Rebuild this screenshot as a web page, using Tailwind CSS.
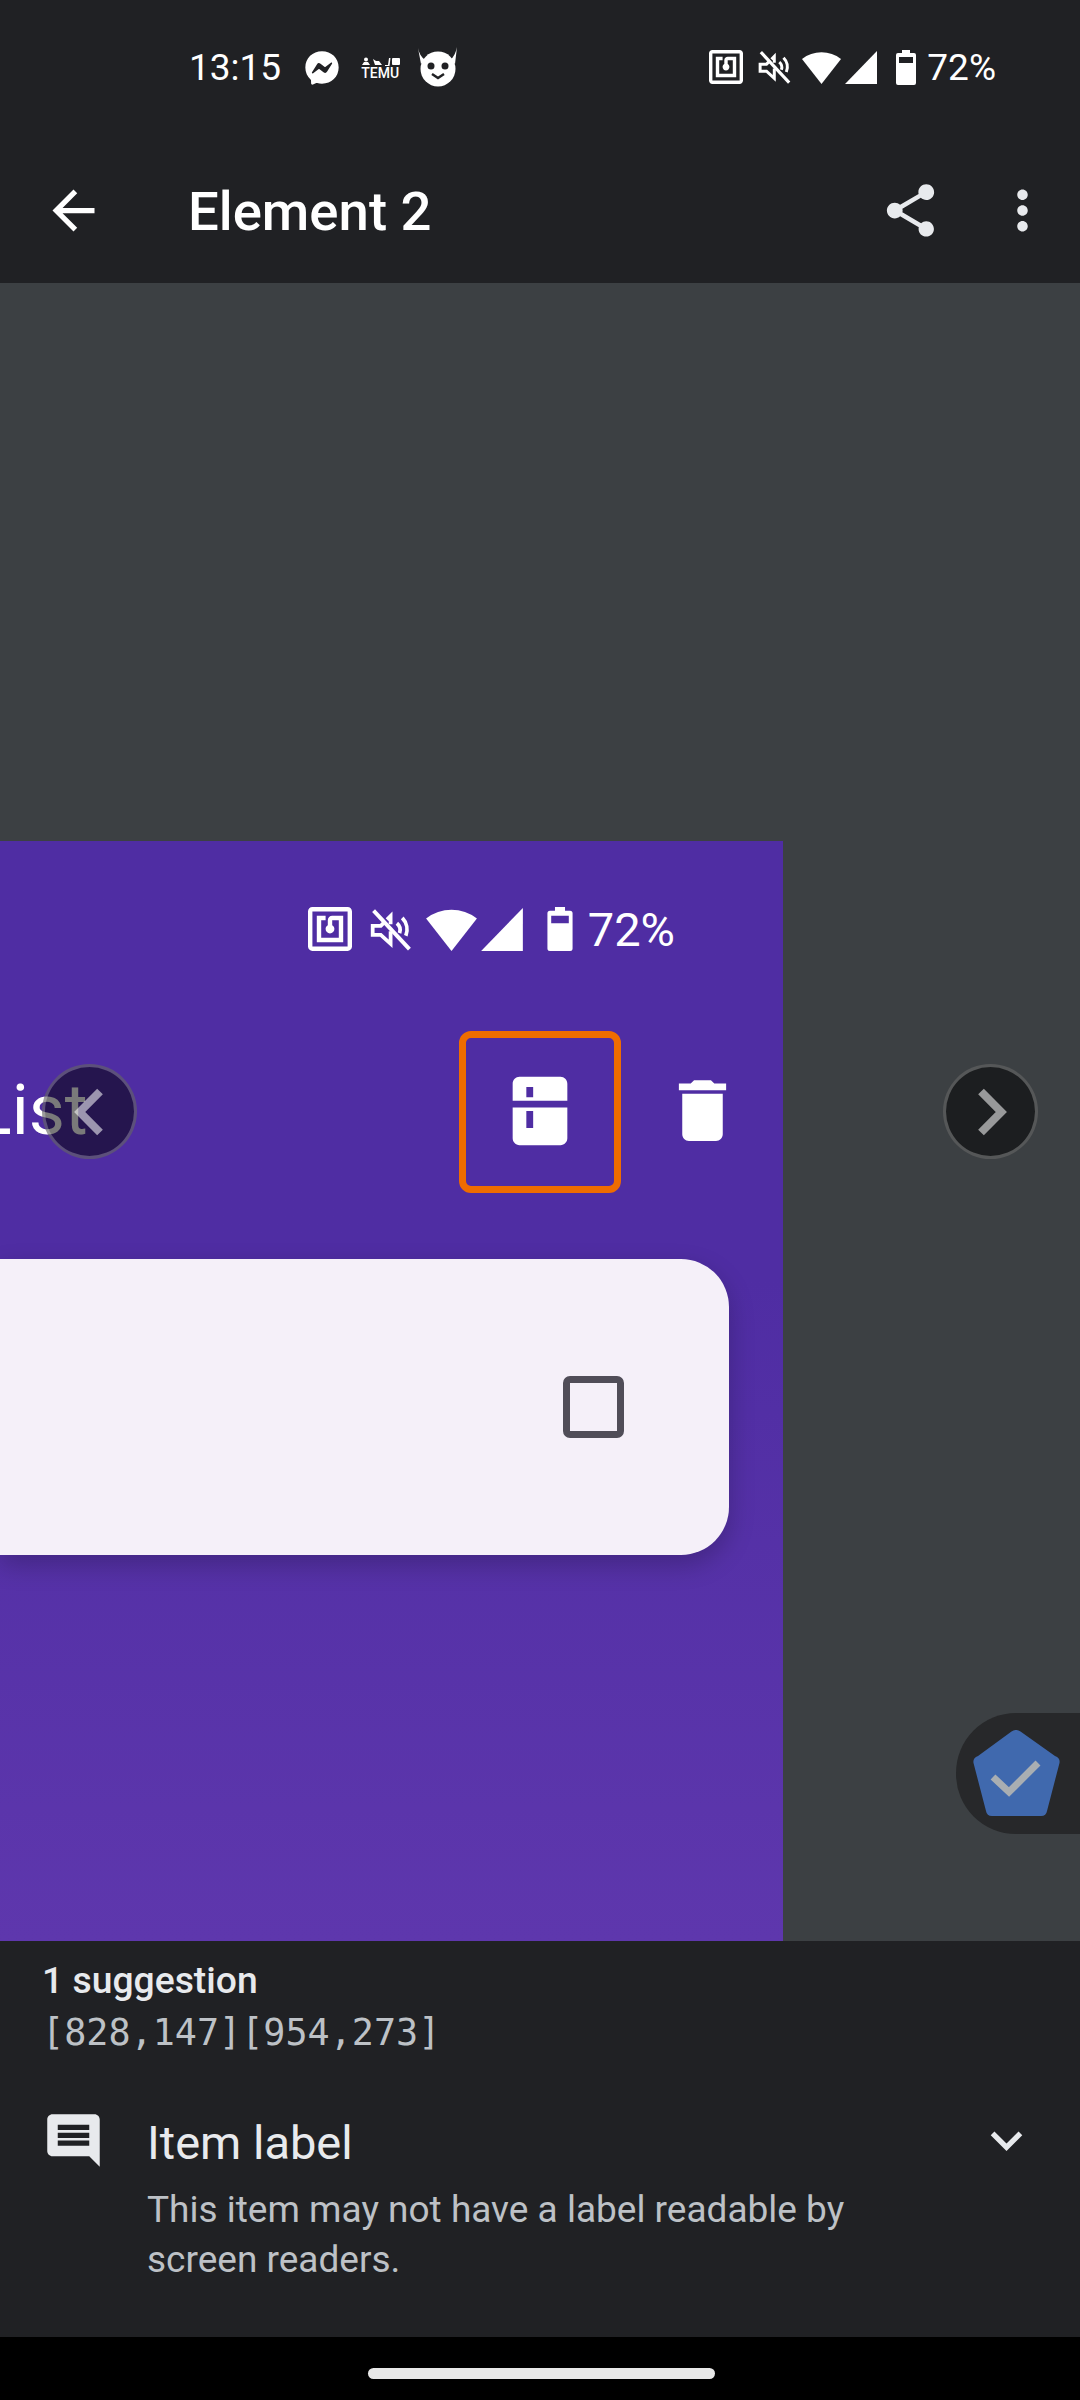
<!DOCTYPE html>
<html lang="en">
<head>
  <meta charset="UTF-8" />
  <meta name="viewport" content="width=device-width, initial-scale=1.0" />
  <title>Element 2</title>
  <script src="https://cdn.jsdelivr.net/npm/@tailwindcss/browser@4"></script>
</head>
<body class="w-[1080px] h-[2400px] overflow-hidden flex flex-col bg-black font-['Roboto',sans-serif]">

  <!-- Status bar -->
  <div class="h-[134px] shrink-0 bg-[#202124] flex items-center pl-[189px] pr-[84px] text-white">
    <span class="text-[37px] leading-none">13:15</span>
    <svg class="ml-[21px] mt-[2px] w-[40px] h-[40px]" viewBox="0 0 24 24"><path fill="#fff" d="M12 2C6.36 2 2 6.13 2 11.7c0 2.91 1.19 5.44 3.14 7.17.16.14.26.35.27.57l.05 1.78c.02.57.6.94 1.12.71l1.98-.87c.17-.08.36-.09.54-.04.91.25 1.88.38 2.9.38 5.64 0 10-4.13 10-9.7S17.64 2 12 2z"/><path fill="#202124" d="M6 14.54l2.94-4.66a1.5 1.5 0 0 1 2.17-.4l2.34 1.75a.6.6 0 0 0 .72 0l3.16-2.4c.42-.32.97.18.69.63l-2.94 4.66a1.5 1.5 0 0 1-2.17.4l-2.34-1.75a.6.6 0 0 0-.72 0l-3.16 2.4c-.42.32-.97-.18-.69-.63z"/></svg>
    <div class="ml-[18px] w-[40px] flex flex-col items-center mt-[2px]">
      <svg class="w-[39px] h-[9px]" viewBox="0 0 39 9"><circle cx="5" cy="2.5" r="2" fill="#fff"/><path fill="#fff" d="M1 8l2-3h4l2 3z"/><path fill="#fff" d="M12 2l3 2h3l3 4h-7z"/><path fill="#fff" d="M24 8h3l1-7h1.5l-1 8h-4.500z"/><rect x="31" y="1" width="8" height="7" rx="1" fill="#fff"/></svg>
      <span class="text-[14px] leading-[13px] font-medium mt-[1px]">TEMU</span>
    </div>
    <svg class="ml-[18px] w-[40px] h-[40px]" viewBox="0 0 40 40"><path fill="#fff" d="M0 1c1 5 3 9 7 12l-4 4zM39 0c-1 5-3 10-7 13l5 4z"/><circle cx="20" cy="22" r="17.500" fill="#fff"/><circle cx="13" cy="19" r="3.500" fill="#202124"/><circle cx="27" cy="19" r="3.500" fill="#202124"/><path d="M14 27l6 4 6-4" fill="none" stroke="#202124" stroke-width="2.500"/></svg>

    <svg class="ml-auto w-[34px] h-[34px]" viewBox="2 2 20 20"><path fill="#fff" d="M20 2H4c-1.100 0-2 .9-2 2v16c0 1.100.9 2 2 2h16c1.100 0 2-.9 2-2V4c0-1.100-.9-2-2-2zm0 18H4V4h16v16zM18 6h-5c-1.100 0-2 .9-2 2v2.280c-.6.35-1 .98-1 1.720 0 1.100.9 2 2 2s2-.9 2-2c0-.74-.4-1.380-1-1.720V8h3v8H8V8h2V6H6v12h12V6z"/></svg>
    <svg class="ml-[15px] w-[34px] h-[34px]" viewBox="0 0 24 24"><g fill="none" stroke="#fff" stroke-width="2.100"><path d="M8.500 7.500L6 10H1.500v5H6l5.500 5v-7"/><path d="M11.500 9V4.500L9.500 6.500"/><path d="M15 8.500a5 5 0 0 1 1.500 5.500M18 5.500a9.500 9.500 0 0 1 2 10"/><path d="M2 1.500L22 23" stroke-width="2.200"/></g></svg>
    <svg class="ml-[10px] w-[39px] h-[33px]" viewBox="0 0 39 33"><path fill="#fff" d="M19.500 33L0 8A32 32 0 0 1 39 8z"/></svg>
    <svg class="ml-[4px] w-[32px] h-[33px]" viewBox="0 0 32 33"><path fill="#fff" d="M32 0v33H0z"/></svg>
    <svg class="ml-[19px] w-[20px] h-[35px]" viewBox="0 0 20 35"><path fill="#fff" fill-rule="evenodd" d="M6 0h8v3h4a2 2 0 0 1 2 2v28a2 2 0 0 1-2 2H2a2 2 0 0 1-2-2V5a2 2 0 0 1 2-2h4zM3 7v6h14V7z"/></svg>
    <span class="ml-[11px] text-[37px] leading-none">72%</span>
  </div>

  <!-- App bar -->
  <div class="h-[149px] shrink-0 bg-[#202124] flex items-center pt-[3px] pl-[42px] pr-[26px]">
    <svg class="w-[63px] h-[63px]" viewBox="0 0 24 24"><path fill="#fff" d="M20 11H7.830l5.590-5.590L12 4l-8 8 8 8 1.410-1.410L7.830 13H20v-2z"/></svg>
    <span class="ml-[83px] mt-[2px] text-[54.5px] leading-none font-medium text-white">Element 2</span>
    <svg class="ml-auto w-[63px] h-[63px]" viewBox="0 0 24 24"><path fill="#e8eaed" d="M18 16.080c-.76 0-1.440.3-1.960.77L8.910 12.700c.05-.23.09-.46.09-.7s-.04-.47-.09-.7l7.050-4.110c.54.5 1.250.81 2.040.81 1.660 0 3-1.340 3-3s-1.340-3-3-3-3 1.340-3 3c0 .24.04.47.09.7L8.040 9.810C7.500 9.310 6.790 9 6 9c-1.660 0-3 1.340-3 3s1.340 3 3 3c.79 0 1.500-.31 2.040-.81l7.120 4.160c-.05.21-.08.43-.08.65 0 1.610 1.310 2.920 2.920 2.920 1.610 0 2.920-1.310 2.920-2.920s-1.310-2.920-2.920-2.920z"/></svg>
    <svg class="ml-[49px] w-[63px] h-[63px]" viewBox="0 0 24 24"><path fill="#e8eaed" d="M12 8c1.100 0 2-.9 2-2s-.9-2-2-2-2 .9-2 2 .9 2 2 2zm0 2c-1.100 0-2 .9-2 2s.9 2 2 2 2-.9 2-2-.9-2-2-2zm0 6c-1.100 0-2 .9-2 2s.9 2 2 2 2-.9 2-2-.9-2-2-2z"/></svg>
  </div>

  <!-- Screenshot preview -->
  <div class="relative h-[1658px] shrink-0 bg-[#3c4043] overflow-hidden">
    <div class="relative mt-[558px] w-[783px] h-[1100px] overflow-hidden bg-linear-to-b from-[#4f2da3] from-40% to-[#5e37ad]">
      <div class="h-[176px] flex items-center justify-end pr-[108px] text-white">
        <svg class="w-[44px] h-[44px]" viewBox="2 2 20 20"><path fill="#fff" d="M20 2H4c-1.100 0-2 .9-2 2v16c0 1.100.9 2 2 2h16c1.100 0 2-.9 2-2V4c0-1.100-.9-2-2-2zm0 18H4V4h16v16zM18 6h-5c-1.100 0-2 .9-2 2v2.280c-.6.35-1 .98-1 1.720 0 1.100.9 2 2 2s2-.9 2-2c0-.74-.4-1.380-1-1.720V8h3v8H8V8h2V6H6v12h12V6z"/></svg>
        <svg class="ml-[18px] w-[43px] h-[43px]" viewBox="0 0 24 24"><g fill="none" stroke="#fff" stroke-width="2.100"><path d="M8.500 7.500L6 10H1.500v5H6l5.500 5v-7"/><path d="M11.500 9V4.500L9.500 6.500"/><path d="M15 8.500a5 5 0 0 1 1.500 5.500M18 5.500a9.500 9.500 0 0 1 2 10"/><path d="M2 1.500L22 23" stroke-width="2.200"/></g></svg>
        <svg class="ml-[13px] w-[51px] h-[43px]" viewBox="0 0 39 33"><path fill="#fff" d="M19.500 33L0 8A32 32 0 0 1 39 8z"/></svg>
        <svg class="ml-[4px] w-[42px] h-[43px]" viewBox="0 0 32 33"><path fill="#fff" d="M32 0v33H0z"/></svg>
        <svg class="ml-[24px] w-[26px] h-[44px]" viewBox="0 0 20 35"><path fill="#fff" fill-rule="evenodd" d="M6 0h8v3h4a2 2 0 0 1 2 2v28a2 2 0 0 1-2 2H2a2 2 0 0 1-2-2V5a2 2 0 0 1 2-2h4zM3 7v6h14V7z"/></svg>
        <span class="ml-[15px] text-[47px] leading-none">72%</span>
      </div>

      <div class="h-[188px] flex items-center pr-[40px]">
        <span class="-ml-[26px] -mt-[2px] mr-auto text-[70px] leading-none text-white">List</span>
        <svg class="w-[82px] h-[82px]" viewBox="0 0 24 24"><path fill="#fff" fill-rule="evenodd" d="M6 2h12c1.100 0 2 .9 2 2v5H4V4c0-1.100.9-2 2-2zM8 5v3h2V5zM4 11h16v9c0 1.100-.9 2-2 2H6c-1.100 0-2-.9-2-2zM8 12v5h2v-5z"/></svg>
        <svg class="ml-[81px] -mt-[2px] w-[81px] h-[81px]" viewBox="0 0 24 24"><path fill="#fff" d="M6 19c0 1.100.9 2 2 2h8c1.100 0 2-.9 2-2V7H6v12zM19 4h-3.500l-1-1h-5l-1 1H5v2h14V4z"/></svg>
      </div>

      <div class="mt-[54px] h-[296px] w-[729px] rounded-r-[48px] bg-[#f5f0f9] shadow-[0_10px_26px_rgba(0,0,0,0.22)] flex items-center justify-end pr-[105px]">
        <div class="w-[61px] h-[62px] rounded-[7px] border-[7px] border-[#504d58]"></div>
      </div>

      <!-- Highlight round the flagged control -->
      <div class="absolute left-[459px] top-[190px] w-[162px] h-[162px] rounded-[12px] border-[7px] border-[#ef6c00]"></div>
    </div>

    <!-- Previous / next -->
    <div class="absolute left-[42px] top-[781px] w-[95px] h-[95px] rounded-full bg-black/[.52] border-[3px] border-white/25 flex items-center justify-center">
      <svg class="w-[94px] h-[94px] shrink-0" viewBox="0 0 94 94"><path d="M57 26.500L36.700 47 57 67.500" fill="none" stroke="#fff" stroke-opacity="0.55" stroke-width="8"/></svg>
    </div>
    <div class="absolute left-[943px] top-[781px] w-[95px] h-[95px] rounded-full bg-black/[.52] border-[3px] border-white/25 flex items-center justify-center">
      <svg class="w-[94px] h-[94px] shrink-0" viewBox="0 0 94 94"><path d="M37 26.500L57.300 47 37 67.500" fill="none" stroke="#fff" stroke-opacity="0.55" stroke-width="8"/></svg>
    </div>

    <!-- Scanner button -->
    <div class="absolute left-[956px] top-[1430px] w-[160px] h-[121px] rounded-l-[60px] bg-[#27282a] pl-[17px] flex items-center">
      <svg class="w-[87px] h-[87px] shrink-0" viewBox="0 0 87 87"><path fill="#4069ae" d="M38.500 1.500a8 8 0 0 1 9 0L82 26a6 6 0 0 1 4.500 7L74 81a6 6 0 0 1-6 5H19a6 6 0 0 1-6-5L.5 33A6 6 0 0 1 5 26z"/><path d="M20 47l16 15 29-29" fill="none" stroke="#a9aeb2" stroke-width="7"/></svg>
    </div>
  </div>

  <!-- Results -->
  <div class="h-[396px] shrink-0 bg-[#202124] pt-[14px]">
    <div class="pl-[42px] text-[37.3px] leading-[50px] font-medium text-[#e8eaed]">1 suggestion</div>
    <div class="pl-[42px] mt-[3px] text-[36.75px] leading-[50px] text-[#bdc1c6] font-['DejaVu_Sans_Mono',monospace]">[828,147][954,273]</div>
    <div class="mt-[51px] flex items-start pl-[42px] pr-[42px]">
      <svg class="w-[63px] h-[63px] shrink-0" viewBox="0 0 24 24"><path fill="#e8eaed" d="M21.990 4c0-1.100-.89-2-1.990-2H4c-1.100 0-2 .9-2 2v12c0 1.100.9 2 2 2h14l4 4-.01-18zM18 14H6v-2h12v2zm0-3H6V9h12v2zm0-3H6V6h12v2z"/></svg>
      <div class="ml-[42px] pt-[2px]">
        <div class="text-[47px] leading-[63px] text-[#e8eaed]">Item label</div>
        <p class="mt-[11px] text-[37px] leading-[50px] text-[#bdc1c6]">This item may not have a label readable by<br />screen readers.</p>
      </div>
      <svg class="ml-auto w-[63px] h-[63px] shrink-0" viewBox="0 0 24 24"><path fill="#e8eaed" d="M16.590 8.590L12 13.170 7.410 8.590 6 10l6 6 6-6z"/></svg>
    </div>
  </div>

  <!-- Nav bar -->
  <div class="flex-1 bg-black flex items-start justify-center pt-[31px] pl-[2px]">
    <div class="w-[347px] h-[11px] rounded-full bg-[#e8e8e8]"></div>
  </div>

</body>
</html>
